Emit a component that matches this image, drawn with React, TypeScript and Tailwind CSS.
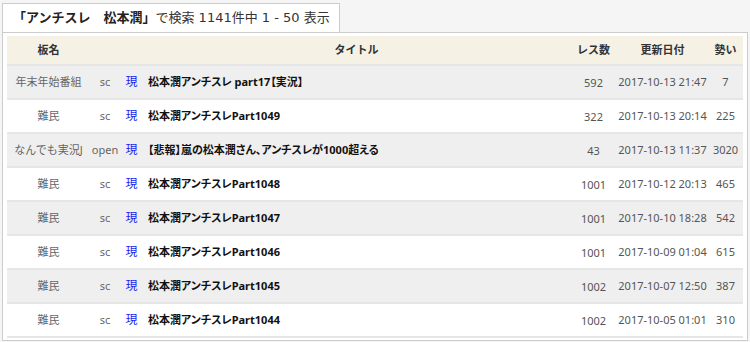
import React from 'react';

type Thread = {
    board: string;
    server: string;
    title: string;
    res: number;
    updated: string;
    speed: number;
};

const threads: Thread[] = [
    { board: '年末年始番組', server: 'sc', title: '松本潤アンチスレ part17【実況】', res: 592, updated: '2017-10-13 21:47', speed: 7 },
    { board: '難民', server: 'sc', title: '松本潤アンチスレPart1049', res: 322, updated: '2017-10-13 20:14', speed: 225 },
    { board: 'なんでも実況J', server: 'open', title: '【悲報】嵐の松本潤さん、アンチスレが1000超える', res: 43, updated: '2017-10-13 11:37', speed: 3020 },
    { board: '難民', server: 'sc', title: '松本潤アンチスレPart1048', res: 1001, updated: '2017-10-12 20:13', speed: 465 },
    { board: '難民', server: 'sc', title: '松本潤アンチスレPart1047', res: 1001, updated: '2017-10-10 18:28', speed: 542 },
    { board: '難民', server: 'sc', title: '松本潤アンチスレPart1046', res: 1001, updated: '2017-10-09 01:04', speed: 615 },
    { board: '難民', server: 'sc', title: '松本潤アンチスレPart1045', res: 1002, updated: '2017-10-07 12:50', speed: 387 },
    { board: '難民', server: 'sc', title: '松本潤アンチスレPart1044', res: 1002, updated: '2017-10-05 01:01', speed: 310 },
];

const App: React.FC = () => {
    return (
        <div className="min-h-[342px] bg-[#f5f5f5] pt-[3px] font-['Noto_Sans','Noto_Sans_CJK_JP',sans-serif] text-[#333]">
            {/* search tab */}
            <div className="ml-[2px] flex h-[29px] w-[338px] items-center border border-b-0 border-[#cccccc] bg-white pl-[10px] font-['DejaVu_Sans','Noto_Sans_CJK_JP',sans-serif] text-[13px]">
                <span className="font-bold text-[#222]">「アンチスレ　松本潤」</span>
                <span>で検索 1141件中 1 - 50 表示</span>
            </div>

            {/* result panel */}
            <div className="ml-[2px] w-[746px] border border-[#cccccc] bg-white px-[4px] pt-[3px] pb-[2px]">
                <table className="w-[736px] table-fixed border-collapse text-[11px]">
                    <colgroup>
                        <col className="w-[83px]" />
                        <col className="w-[30px]" />
                        <col className="w-[23px]" />
                        <col className="w-[427px]" />
                        <col className="w-[47px]" />
                        <col className="w-[91px]" />
                        <col className="w-[35px]" />
                    </colgroup>
                    <thead>
                        <tr className="h-[29px] border-b-2 border-[#e6e6e6] bg-[#f6f1e5] text-[#333]">
                            <th className="font-bold">板名</th>
                            <th></th>
                            <th></th>
                            <th className="font-bold">タイトル</th>
                            <th className="font-bold">レス数</th>
                            <th className="font-bold">更新日付</th>
                            <th className="font-bold">勢い</th>
                        </tr>
                    </thead>
                    <tbody>
                        {threads.map((t, i) => (
                            <tr
                                key={i}
                                className={`h-[34px] border-b-2 border-[#e6e6e6] text-[#666] ${i % 2 === 0 ? 'bg-[#efefef]' : 'bg-white'}`}
                            >
                                <td className="whitespace-nowrap text-center">{t.board}</td>
                                <td className="text-center">{t.server}</td>
                                <td className="text-center text-[12px] text-[#2222ee]">現</td>
                                <td className="whitespace-nowrap pl-[5px] font-bold text-[#111] [font-feature-settings:'palt']">{t.title}</td>
                                <td className="pt-[2px] text-center text-[#555]">{t.res}</td>
                                <td className="whitespace-nowrap text-center text-[#555]">{t.updated}</td>
                                <td className="text-center text-[#555]">{t.speed}</td>
                            </tr>
                        ))}
                    </tbody>
                </table>
            </div>
        </div>
    );
};

export default App;
